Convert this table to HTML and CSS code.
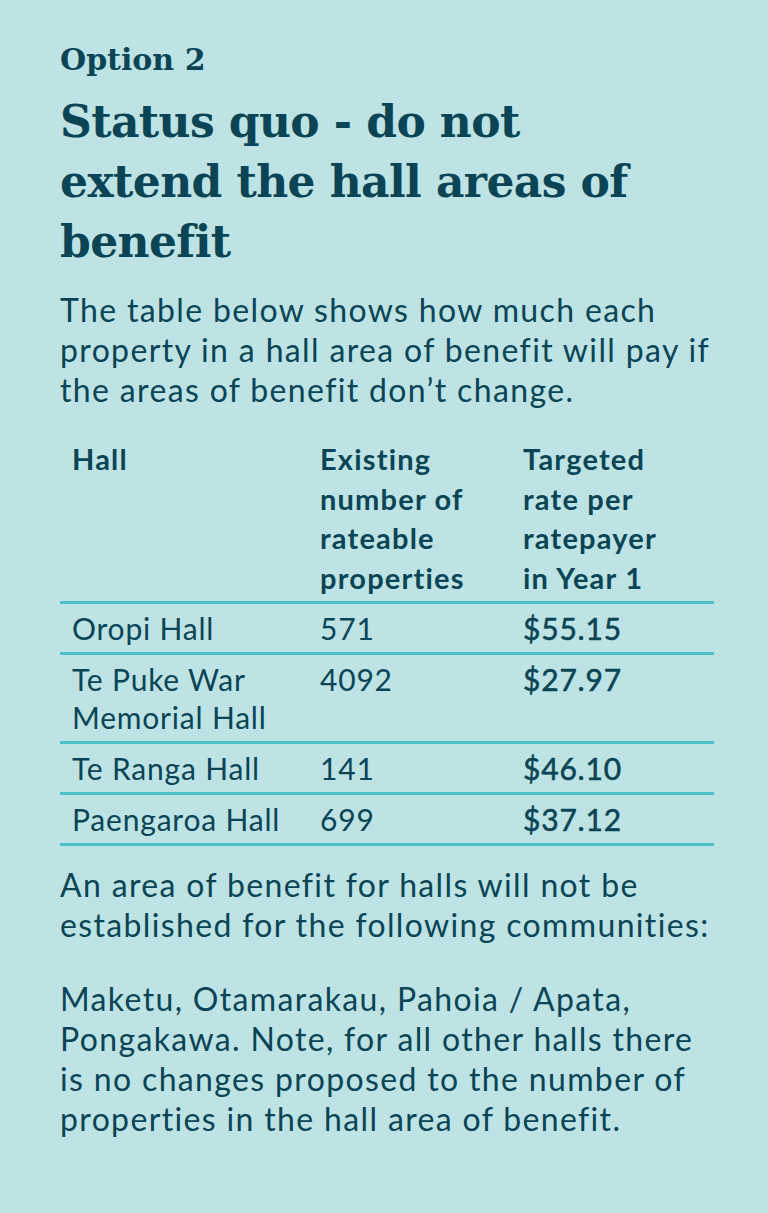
FILE: index.html
```html
<!DOCTYPE html>
<html lang="en">
<head>
<meta charset="utf-8">
<title>Option 2</title>
<link rel="stylesheet" href="styles.css">
</head>
<body>
<main class="panel">
  <h2 class="eyebrow">Option 2</h2>
  <h1 class="title">Status quo - do not extend the hall areas of benefit</h1>
  <p class="lead">The table below shows how much each property in a hall area of benefit will pay if the areas of benefit don’t change.</p>
  <table class="rates">
    <colgroup>
      <col class="c-hall">
      <col class="c-num">
      <col class="c-rate">
    </colgroup>
    <thead>
      <tr>
        <th>Hall</th>
        <th>Existing number of rateable properties</th>
        <th>Targeted rate per ratepayer in Year 1</th>
      </tr>
    </thead>
    <tbody>
      <tr><td>Oropi Hall</td><td>571</td><td class="money">$55.15</td></tr>
      <tr><td>Te Puke War Memorial Hall</td><td>4092</td><td class="money">$27.97</td></tr>
      <tr><td>Te Ranga Hall</td><td>141</td><td class="money">$46.10</td></tr>
      <tr><td>Paengaroa Hall</td><td>699</td><td class="money">$37.12</td></tr>
    </tbody>
  </table>
  <p class="body">An area of benefit for halls will not be established for the following communities:</p>
  <p class="body">Maketu, Otamarakau, Pahoia / Apata, Pongakawa. Note, for all other halls there is no changes proposed to the number of properties in the hall area of benefit.</p>
</main>
</body>
</html>
```
FILE: styles.css
```css
html, body {
  margin: 0;
  padding: 0;
  background: #bde3e4;
}
body {
  width: 768px;
  min-height: 1213px;
  color: #0b4555;
  font-family: "Lato", "Noto Sans", sans-serif;
}
.panel {
  padding: 37px 44px 0 60px;
}
.eyebrow {
  margin: 0;
  font-family: "DejaVu Serif", serif;
  font-weight: bold;
  font-size: 30px;
  line-height: 46px;
  letter-spacing: 0;
}
.title {
  margin: 9px 0 0;
  font-family: "DejaVu Serif", serif;
  font-weight: bold;
  font-size: 44px;
  line-height: 60px;
  letter-spacing: -0.6px;
  max-width: 590px;
}
.lead, .body {
  margin: 0;
  font-size: 32px;
  line-height: 40px;
  letter-spacing: 1.35px;
  font-weight: 400;
}
.lead {
  margin-top: 18px;
}
.rates {
  margin-top: 29px;
  width: 654px;
  table-layout: fixed;
  border-collapse: collapse;
  font-size: 30px;
  line-height: 38px;
  letter-spacing: 0.8px;
}
.c-hall { width: 248px; }
.c-num { width: 203px; }
.c-rate { width: 203px; }
.rates th {
  text-align: left;
  vertical-align: top;
  font-weight: bold;
  font-size: 29px;
  line-height: 39.5px;
  letter-spacing: 1.2px;
  padding: 0 30px 4px 12px;
  border-bottom: 3px solid #4bc1c3;
}
.rates td {
  vertical-align: top;
  padding: 5px 10px 5px 12px;
  border-bottom: 3px solid #4bc1c3;
}
.money {
  -webkit-text-stroke: 0.55px #0b4555;
}
.rates + .body { margin-top: 19px; }
.body + .body { margin-top: 34px; }
```
